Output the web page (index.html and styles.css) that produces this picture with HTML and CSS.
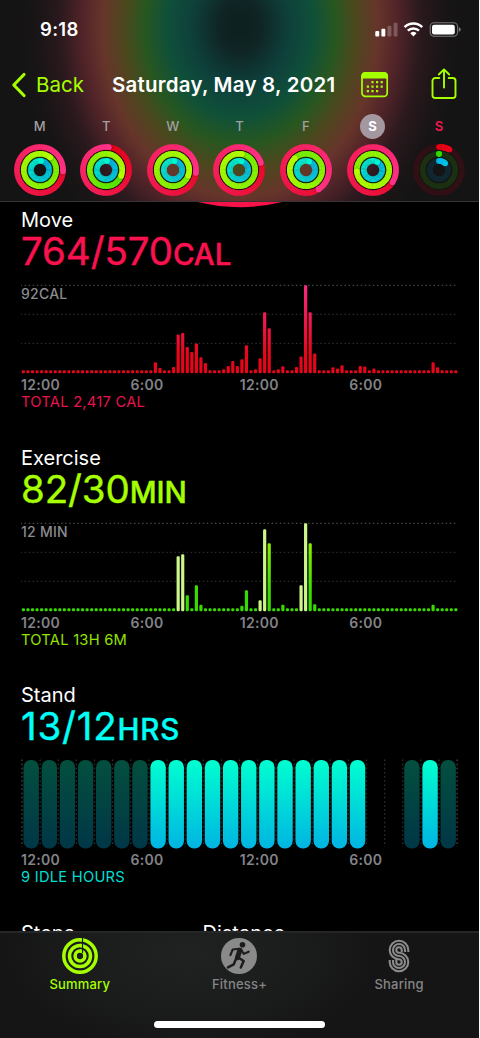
FILE: index.html
```html
<!DOCTYPE html>
<html lang="en">
<head>
<meta charset="utf-8">
<title>Activity</title>
<link rel="stylesheet" href="styles.css">
</head>
<body>
<div class="phone">
  <header class="header">
    <div class="status">
      <span class="time">9:18</span>
      <svg class="status-icons" width="88" height="18" viewBox="374 20 88 18">
        <g fill="#fff">
          <rect x="375.3" y="31" width="3.9" height="5.4" rx="1"/>
          <rect x="381.4" y="28.7" width="3.9" height="7.7" rx="1"/>
          <rect x="387.5" y="25.7" width="3.9" height="10.7" rx="1" opacity=".24"/>
          <rect x="393.6" y="22.7" width="3.9" height="13.7" rx="1" opacity=".24"/>
          <path d="M410.3 33.2a4.6 4.6 0 0 1 6.2 0L413.4 36.5z"/>
        </g>
        <g fill="none" stroke="#fff" stroke-width="2.5">
          <path d="M404.6 27.1a12.8 12.8 0 0 1 17.6 0"/>
          <path d="M407.8 30.7a8.2 8.2 0 0 1 11.2 0"/>
        </g>
        <rect x="430.2" y="22.8" width="27.4" height="13.4" rx="4" fill="none" stroke="#fff" stroke-opacity=".42" stroke-width="1.1"/>
        <rect x="432" y="24.7" width="22.8" height="9.7" rx="2.2" fill="#fff"/>
        <path d="M458.9 27.3q1.8.5 1.8 2.2t-1.8 2.2z" fill="#fff" opacity=".45"/>
      </svg>
    </div>
    <nav class="nav">
      <svg class="chevron" width="16" height="26" viewBox="0 0 16 26"><path d="M13 2.5 2.8 13 13 23.5" fill="none" stroke="#a6ff00" stroke-width="3.2" stroke-linecap="round" stroke-linejoin="round"/></svg>
      <span class="back">Back</span>
      <h1 class="title">Saturday, May 8, 2021</h1>
      <svg class="calendar" width="28" height="26" viewBox="0 0 28 26">
        <rect x="1" y="1" width="25.2" height="23.4" rx="3.4" fill="none" stroke="#a6ff00" stroke-width="1.7"/>
        <path d="M.3 6.5V4A4 4 0 0 1 4.3.1H23A4 4 0 0 1 27 4V6.5z" fill="#a6ff00"/>
        <g fill="#a6ff00">
          <path d="M10.4 9h2.2v2.2h-2.2zM15 9h2.2v2.2h-2.2zM19.6 9h2.2v2.2h-2.2zM5.8 13.5h2.2v2.2h-2.2zM10.4 13.5h2.2v2.2h-2.2zM15 13.5h2.2v2.2h-2.2zM19.6 13.5h2.2v2.2h-2.2zM5.8 18h2.2v2.2h-2.2zM10.4 18h2.2v2.2h-2.2zM15 18h2.2v2.2h-2.2z"/>
        </g>
      </svg>
      <svg class="share" width="26" height="32" viewBox="0 0 26 32">
        <g fill="none" stroke="#a6ff00" stroke-width="1.9" stroke-linecap="round" stroke-linejoin="round">
          <path d="M8.3 10H4.3A2.8 2.8 0 0 0 1.5 12.8V27.2A2.8 2.8 0 0 0 4.3 30H21.7A2.8 2.8 0 0 0 24.5 27.2V12.8A2.8 2.8 0 0 0 21.7 10H17.7"/>
          <path d="M13 19.5V1.8M7.8 6.5 13 1.4 18.2 6.5"/>
        </g>
      </svg>
    </nav>
    <div class="week" id="week"></div>
  </header>

  <main class="content">
    <svg class="ring-edge" width="90" height="6" viewBox="0 0 90 6"><path d="M3 0Q45 10.4 87 0z" fill="#f8124a"/></svg>
    <section class="metric move">
      <h2 class="name">Move</h2>
      <p class="value">764/570<span class="unit">CAL</span></p>
      <div class="chart"><span class="scale">92CAL</span><svg id="move" width="458" height="96"></svg></div>
      <div class="axis"><span>12:00</span><span>6:00</span><span>12:00</span><span>6:00</span></div>
      <p class="total">TOTAL 2,417 CAL</p>
    </section>
    <section class="metric exercise">
      <h2 class="name">Exercise</h2>
      <p class="value">82/30<span class="unit">MIN</span></p>
      <div class="chart"><span class="scale">12 MIN</span><svg id="exercise" width="458" height="96"></svg></div>
      <div class="axis"><span>12:00</span><span>6:00</span><span>12:00</span><span>6:00</span></div>
      <p class="total">TOTAL 13H 6M</p>
    </section>
    <section class="metric stand">
      <h2 class="name">Stand</h2>
      <p class="value">13/12<span class="unit">HRS</span></p>
      <div class="chart"><svg id="stand" width="458" height="96"></svg></div>
      <div class="axis"><span>12:00</span><span>6:00</span><span>12:00</span><span>6:00</span></div>
      <p class="total">9 IDLE HOURS</p>
    </section>
    <section class="extras"><h2 class="name">Steps</h2><h2 class="name">Distance</h2></section>
  </main>

  <footer class="tabbar">
    <div class="tabs">
      <div class="tab active">
        <svg width="38" height="38" viewBox="-19 -19 38 38">
          <g fill="none" stroke="#a6ff00" stroke-width="3.5"><circle r="16.2"/><circle r="10.5"/><circle r="4.9"/></g>
          <path d="M2.5-19V-3" stroke="#1b1c1c" stroke-width="1.2"/>
          <path d="M.8-18V-14.4M.8-12.3V-8.7M.8-6.7V-3.1" stroke="#a6ff00" stroke-width="1.4"/>
        </svg>
        <span>Summary</span>
      </div>
      <div class="tab">
        <svg width="38" height="38" viewBox="-19 -19 38 38">
          <circle r="18" fill="#8a8a8b"/>
          <circle cx="3.5" cy="-11.3" r="2.8" fill="#1b1c1c"/>
          <g fill="none" stroke="#1b1c1c" stroke-linecap="round" stroke-linejoin="round">
            <path d="M.8-5.8-1.6 1.8" stroke-width="5"/>
            <path d="M0-7.2-6.3-6.5-8.6-.8M2.3-6 4.8-2.1 9.7-4.3" stroke-width="2.1"/>
            <path d="M-.4 1.7 4.7 5 1.8 11.5M-2.8 2.4-5.2 8.3-11 11.4" stroke-width="2.5"/>
          </g>
        </svg>
        <span>Fitness+</span>
      </div>
      <div class="tab">
        <svg width="38" height="38" viewBox="-19 -19 38 38">
          <g fill="none" stroke="#8a8a8b" stroke-width="2.1">
            <path d="M9.3-4V-6A9.3 9.3 0 1 0 0 3.3A2.7 2.7 0 1 1-2.7 6V4"/>
            <path d="M6-4V-6A6 6 0 1 0 0 0A6 6 0 1 1-6 6V4"/>
            <path d="M2.7-4V-6A2.7 2.7 0 1 0 0-3.3A9.3 9.3 0 1 1-9.3 6V4"/>
          </g>
        </svg>
        <span>Sharing</span>
      </div>
    </div>
    <div class="home"></div>
  </footer>
</div>
<script src="charts.js"></script>
</body>
</html>
```
FILE: styles.css
```css
* { box-sizing: border-box; }
body { margin: 0; background: #fff; font-family: Inter, "Liberation Sans", sans-serif; }
h1, h2, p { margin: 0; font-weight: 400; }
svg { display: block; flex: none; }
.phone { width: 479px; height: 1038px; background: #000; color: #fff; display: flex; flex-direction: column; overflow: hidden; }

.header {
  height: 202px; flex: none; border-bottom: 1px solid #373536; background-color: #141414;
  background-image: radial-gradient(ellipse 222px 275px at 240px 26px, #0d1f1f 0%, #0f2424 9%, #0e403b 22%, #0f5039 33%, #275720 43%, #4b481d 52%, #66352a 62%, #542529 70%, #2b191e 81%, #1a1516 91%, #141414 100%);
}
.status { height: 57px; padding: 17px 17px 0 40px; display: flex; justify-content: space-between; }
.time { font-size: 18.5px; line-height: 24px; font-weight: 600; letter-spacing: .3px; }
.status-icons { margin-top: 3px; }
.nav { height: 55px; padding-left: 11px; display: flex; align-items: center; }
.back { width: 76px; padding-left: 9px; color: #a6ff00; font-size: 20.5px; letter-spacing: 0; }
.title { width: 248px; padding-left: 9px; font-size: 20.5px; font-weight: 600; white-space: nowrap; letter-spacing: .23px; }
.calendar { margin: 0 0 0 10px; }
.share { margin-left: 42px; margin-top: -2px; }
.week { display: grid; grid-template-columns: repeat(7, 66.55px); padding-left: 6.5px; }
.day { display: flex; flex-direction: column; align-items: center; gap: 4px; color: #a39fa0; font-size: 13px; font-weight: 500; }
.letter { width: 25px; height: 25px; margin-top: 2px; border-radius: 50%; line-height: 25px; text-align: center; }
.selected .letter { background: #a3989f; color: #fff; font-weight: 700; }
.today .letter { color: #f2164f; font-weight: 600; }

.content { flex: 1; min-height: 0; overflow: hidden; position: relative; padding: 6px 0 0 21px; }
.ring-edge { position: absolute; left: 195px; top: 0; }
.metric { height: 237.7px; }
.name { font-size: 20px; line-height: 24px; letter-spacing: 0; }
.value { font-size: 38.5px; line-height: 38px; font-weight: 400; -webkit-text-stroke: .4px currentColor; white-space: nowrap; }
.unit { font-size: 29.5px; font-weight: 500; }
.chart { position: relative; height: 96px; margin-top: 7px; }
.scale { position: absolute; left: 0; top: 5px; font-size: 14px; line-height: 18px; font-weight: 500; letter-spacing: .25px; color: #8b8b90; }
.axis { display: grid; grid-template-columns: repeat(4, 109.4px); font-size: 14px; line-height: 18px; font-weight: 600; letter-spacing: .3px; color: #838388; }
.total { font-size: 14.7px; line-height: 17px; letter-spacing: .25px; }
.move .value { color: #fa114f; letter-spacing: -.1px; }
.move .total { color: #e81250; }
.exercise .value { color: #a6ff00; letter-spacing: -.1px; }
.exercise .total { color: #94e300; }
.stand .value { color: #00fff6; letter-spacing: .8px; }
.stand .total { color: #00dfd2; }
.extras { display: grid; grid-template-columns: 181.5px 1fr; }

.tabbar { height: 107px; flex: none; border-top: 2px solid #252627; background: radial-gradient(ellipse 190px 100px at 190px 20px, #202222, #1b1c1c 55%, #151515); }
.tabs { display: grid; grid-template-columns: repeat(3, 1fr); padding-top: 4px; }
.tab { display: flex; flex-direction: column; align-items: center; color: #858586; font-size: 13px; line-height: 18px; font-weight: 500; letter-spacing: .2px; }
.tab span { margin-top: 0; }
.tab.active { color: #a6ff00; }
.home { width: 171px; height: 6.5px; border-radius: 4px; background: #fff; margin: 28px auto 0; }
```
FILE: charts.js
```js
const NS = 'http://www.w3.org/2000/svg';
function add(parent, tag, attrs) {
  const el = document.createElementNS(NS, tag);
  for (const k in attrs) el.setAttribute(k, attrs[k]);
  parent.appendChild(el);
  return el;
}
function mix(a, b, t) {
  return 'rgb(' + a.map((v, i) => Math.round(v + (b[i] - v) * t)).join(',') + ')';
}

/* Activity rings: progress is counted in turns, the last turn is visible */
function ring(svg, r, turns, from, to, track) {
  if (turns < 1) add(svg, 'circle', { r, fill: 'none', stroke: track, 'stroke-width': 5.7 });
  const start = Math.max(0, turns - 1);
  const n = 72;
  const point = t => [r * Math.sin(t * 2 * Math.PI), -r * Math.cos(t * 2 * Math.PI)];
  const dot = (t, color) => {
    const [cx, cy] = point(t);
    add(svg, 'circle', { cx, cy, r: 2.85, fill: color });
  };
  if (turns < 1) dot(0, mix(from, to, 0));
  for (let i = 0; i < n; i++) {
    const a = start + (turns - start) * i / n;
    const b = Math.min(turns, a + (turns - start) / n + .004);
    const p = point(a), q = point(b);
    add(svg, 'path', { d: `M${p}A${r} ${r} 0 0 1 ${q}`, fill: 'none', stroke: mix(from, to, Math.min(1, a / Math.max(turns, .8))), 'stroke-width': 5.7 });
  }
  if (turns >= 1) {
    const [cx, cy] = point(turns + .006);
    add(svg, 'circle', { cx, cy, r: 2.85, fill: '#000', opacity: .25 });
  }
  dot(turns, mix(from, to, Math.min(1, turns / .8)));
}

const days = [
  ['M', 1.26, 2.11, 1.02], ['T', 1.02, 1.31, 1.02], ['W', 1.27, 2.31, 1.03],
  ['T', 1.2, 2.03, 1.05], ['F', 1.41, 1.88, 1.06], ['S', 1.34, 2.74, 1.08],
  ['S', .075, .001, .12]
];
days.forEach(([name, move, exercise, stand], i) => {
  const day = document.createElement('div');
  day.className = 'day' + (i === 5 ? ' selected' : i === 6 ? ' today' : '');
  const letter = document.createElement('span');
  letter.className = 'letter';
  letter.textContent = name;
  day.appendChild(letter);
  const svg = add(day, 'svg', { width: 54, height: 54, viewBox: '-27 -27 54 54' });
  if (i < 6) {
    add(svg, 'circle', { r: 19.7, fill: 'none', stroke: '#25090f', 'stroke-width': 1.4 });
    add(svg, 'circle', { r: 12.7, fill: 'none', stroke: '#122910', 'stroke-width': 1.6 });
  }
  ring(svg, 23, move, [226, 0, 20], [255, 50, 135], '#301014');
  ring(svg, 16.2, exercise, [50, 222, 0], [180, 255, 0], '#1a3011');
  ring(svg, 9.1, stand, [0, 182, 232], [0, 246, 208], '#10272f');
  document.getElementById('week').appendChild(day);
});

/* Quarter-hour bar charts; `bars` maps a slot to its height */
function gradient(svg, id, top, bottom, y1, y2) {
  const g = add(svg, 'linearGradient', { id, gradientUnits: 'userSpaceOnUse', x1: 0, x2: 0, y1, y2 });
  add(g, 'stop', { offset: 0, 'stop-color': top });
  add(g, 'stop', { offset: 1, 'stop-color': bottom });
}
function barChart(id, bars, pale, top, bottom) {
  const svg = document.getElementById(id);
  gradient(svg, id + '-fill', top, bottom, 5, 75);
  [5.4, 34.4, 63.4].forEach((y, i) => add(svg, 'line', {
    x1: -.5, x2: 436, y1: y, y2: y, stroke: i ? '#2b2b2d' : '#464649', 'stroke-width': 1.4, 'stroke-dasharray': '1.5 2.55'
  }));
  for (let i = 0; i < 96; i++) {
    const h = bars[i] || 3;
    add(svg, 'rect', { x: .8 + i * 4.552, y: 93.2 - h, width: 3.2, height: h, rx: 1.2, fill: pale.includes(i) ? '#cdf58a' : `url(#${id}-fill)` });
  }
}
barChart('move', {
  29: 11, 30: 5.3, 33: 6.3, 34: 38.7, 35: 40.3, 36: 26.3, 37: 21.3, 38: 29.7, 39: 16, 40: 10.3,
  44: 4, 45: 7.3, 46: 12.3, 47: 7.3, 48: 14, 49: 28, 51: 4, 52: 15, 53: 61, 54: 45, 56: 4, 57: 7,
  60: 6.3, 61: 16.7, 62: 88, 63: 61, 64: 19.7, 68: 6, 69: 4.7, 70: 8, 74: 7.3, 75: 6.7, 77: 4.7, 90: 11, 91: 6
}, [], '#fb2a80', '#e80519');
barChart('exercise', {
  34: 55, 35: 57, 36: 16, 38: 26, 39: 6.5, 48: 5.5, 49: 21, 52: 11, 53: 82, 54: 68, 57: 6.5,
  61: 26, 62: 88, 63: 68, 64: 7, 90: 6.5
}, [34, 35, 52, 53, 61, 62], '#a8f500', '#38db00');

/* Hourly stand capsules */
const stand = document.getElementById('stand');
gradient(stand, 'stood', '#00ffd0', '#00b5e2', 5, 93);
gradient(stand, 'idle', '#034f3e', '#003747', 5, 93);
for (let k = 0; k <= 24; k++) {
  const x = 1 + k * 18.13;
  add(stand, 'line', { x1: x, x2: x, y1: 4.5, y2: 92, stroke: k % 24 ? '#303032' : '#48484b', 'stroke-width': 1.3, 'stroke-dasharray': '1.5 2.65' });
}
for (let k = 0; k < 24; k++) {
  if (k === 19 || k === 20) continue;
  const idle = k < 7 || k === 21 || k === 23;
  add(stand, 'rect', { x: 2.5 + k * 18.13, y: 4.9, width: 15.4, height: 88.5, rx: 7.4, fill: idle ? 'url(#idle)' : 'url(#stood)' });
}
```
